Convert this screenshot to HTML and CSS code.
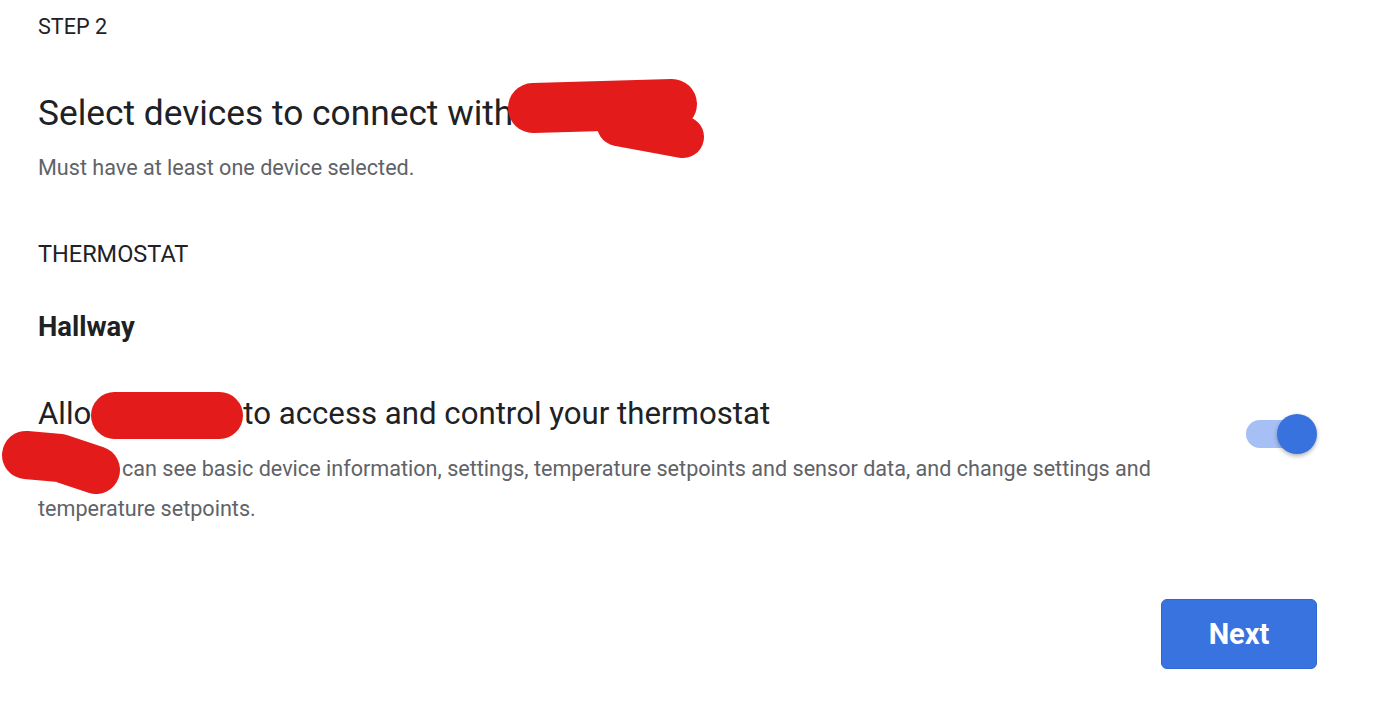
FILE: index.html
```html
<!DOCTYPE html>
<html lang="en">
<head>
<meta charset="utf-8">
<title>Step 2 - Select devices</title>
<link rel="stylesheet" href="styles.css">
</head>
<body>
<main class="page">
  <div class="step">STEP 2</div>
  <h1 class="title">Select devices to connect with<svg class="blob blob-title" width="200" height="80" viewBox="0 0 200 80"><path d="M25 28 L164 24" /><path d="M110 45 L175 57" class="thin"/></svg></h1>
  <p class="subtitle">Must have at least one device selected.</p>
  <div class="category">THERMOSTAT</div>
  <div class="device">Hallway</div>
  <section class="permission">
    <div class="perm-text">
      <div class="perm-title">Allo<span class="redact-pill"></span>to access and control your thermostat</div>
      <p class="perm-desc"><svg class="blob blob-desc" width="124" height="64" viewBox="0 0 124 64"><path d="M26 23 L60 26 L96 38" /></svg><span class="desc-gap"></span>can see basic device information, settings, temperature setpoints and sensor data, and change settings and temperature setpoints.</p>
    </div>
    <div class="toggle" role="switch" aria-checked="true"><span class="track"></span><span class="knob"></span></div>
  </section>
  <div class="actions"><button class="next">Next</button></div>
</main>
</body>
</html>
```
FILE: styles.css
```css
* { box-sizing: border-box; }
html, body { margin: 0; padding: 0; background: #ffffff; }
body {
  font-family: Roboto, "Noto Sans", "Liberation Sans", sans-serif;
  color: #202124;
  width: 1380px;
  height: 702px;
  overflow: hidden;
}
.page {
  padding: 15px 63px 0 38px;
}
.step {
  font-size: 21.6px;
  line-height: 24px;
  margin: 0;
}
.title {
  position: relative;
  font-size: 35.3px;
  line-height: 40px;
  font-weight: 400;
  margin: 54px 0 0;
}
.blob { position: absolute; overflow: visible; }
.blob path {
  fill: none;
  stroke: #e41b1b;
  stroke-width: 50;
  stroke-linecap: round;
  stroke-linejoin: round;
}
.blob path.thin { stroke-width: 42; }
.blob-title { left: 470px; top: -13px; }
.subtitle {
  font-size: 21.6px;
  line-height: 24px;
  color: #5f6368;
  margin: 23px 0 0;
}
.category {
  font-size: 23.5px;
  line-height: 24px;
  margin: 62px 0 0;
}
.device {
  font-size: 27.4px;
  line-height: 32px;
  font-weight: 700;
  margin: 45px 0 0;
}
.permission {
  display: flex;
  align-items: flex-start;
  justify-content: space-between;
  gap: 60px;
  margin: 49px 0 0;
}
.perm-text { flex: 1; max-width: 1150px; }
.perm-title {
  font-size: 31.2px;
  line-height: 36px;
}
.redact-pill {
  display: inline-block;
  width: 152px;
  height: 47px;
  margin-bottom: -15px;
  vertical-align: baseline;
  background: #e41b1b;
  border-radius: 24px;
}
.perm-desc {
  position: relative;
  font-size: 21.6px;
  line-height: 40px;
  color: #5f6368;
  margin: 17px 0 0;
}
.desc-gap { display: inline-block; width: 84px; }
.blob-desc { left: -38px; top: -17px; }
.blob-desc path { stroke-width: 48; }
.toggle {
  position: relative;
  flex: none;
  width: 71px;
  height: 40px;
  margin-top: 22px;
}
.track {
  position: absolute;
  left: 0;
  top: 6px;
  width: 62px;
  height: 28px;
  border-radius: 14px;
  background: #a6bff4;
}
.knob {
  position: absolute;
  right: 0;
  top: 0;
  width: 40px;
  height: 40px;
  border-radius: 50%;
  background: #3872df;
  box-shadow: 0 2px 4px rgba(0,0,0,0.3);
}
.actions {
  display: flex;
  justify-content: flex-end;
  margin-top: 70px;
}
.next {
  width: 156px;
  height: 70px;
  border: 1px solid #2f66cf;
  border-radius: 6px;
  background: #3873df;
  color: #ffffff;
  font-family: Roboto, "Noto Sans", "Liberation Sans", sans-serif;
  font-size: 29px;
  font-weight: 700;
  padding: 0;
}
```
